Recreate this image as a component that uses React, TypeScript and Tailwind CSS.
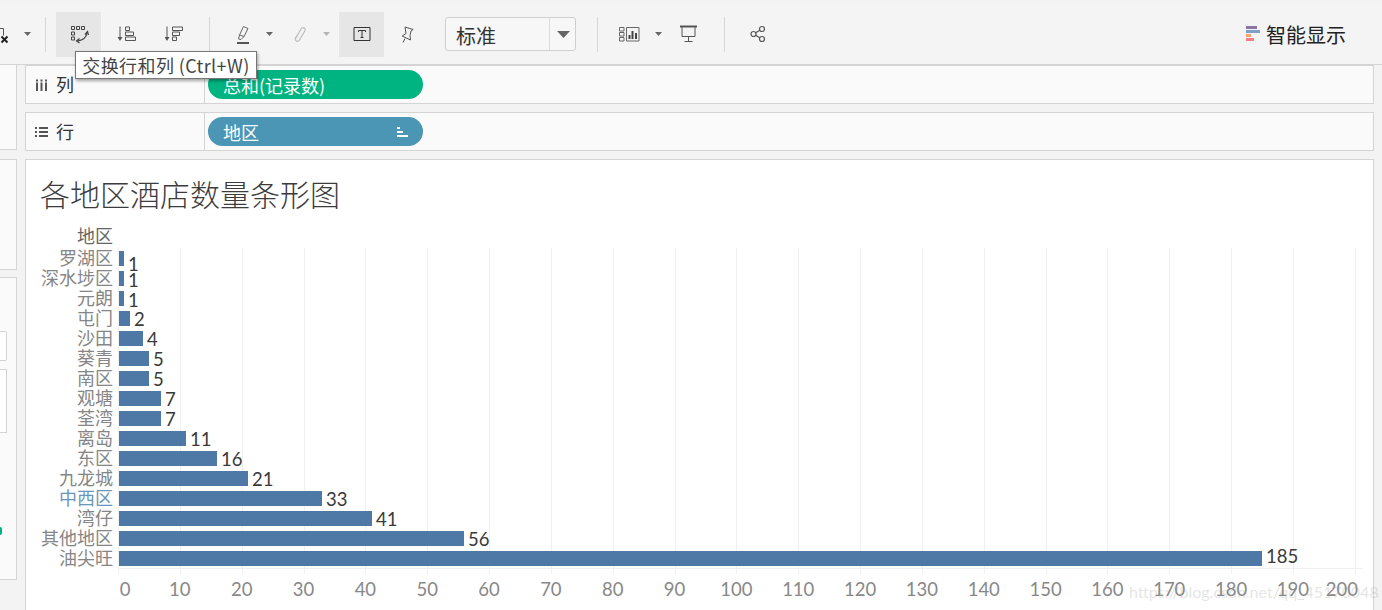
const rows: [string, number, number, number, string][] = [
  ["罗湖区", 1, 5, 6, "text-[#868686]"],
  ["深水埗区", 1, 5, 2, "text-[#868686]"],
  ["元朗", 1, 5, 2, "text-[#868686]"],
  ["屯门", 2, 11, 1, "text-[#868686]"],
  ["沙田", 4, 24, 1, "text-[#868686]"],
  ["葵青", 5, 30, 1, "text-[#868686]"],
  ["南区", 5, 30, 1, "text-[#868686]"],
  ["观塘", 7, 42, 1, "text-[#868686]"],
  ["荃湾", 7, 42, 1, "text-[#868686]"],
  ["离岛", 11, 67, 1, "text-[#868686]"],
  ["东区", 16, 98, 1, "text-[#868686]"],
  ["九龙城", 21, 129, 1, "text-[#868686]"],
  ["中西区", 33, 203, 1, "text-[#6a96bb]"],
  ["湾仔", 41, 253, 1, "text-[#868686]"],
  ["其他地区", 56, 345, 1, "text-[#868686]"],
  ["油尖旺", 185, 1143, -2, "text-[#868686]"],
];
const UNIT = 6.184;
const ticks = Array.from({ length: 21 }, (_, i) => i * 10);

function Sep({ className }: { className: string }) {
  return <div className={`h-[35px] w-px shrink-0 bg-[#d6d6d6] ${className}`} />;
}
function Caret({ className, light }: { className: string; light?: boolean }) {
  return (
    <svg width="7" height="4" viewBox="0 0 7 4" className={`shrink-0 ${className}`}>
      <path d="M0 0h7L3.500 4z" fill={light ? "#b5b5b5" : "#666"} />
    </svg>
  );
}
function Slot({ children, active, w }: { children: React.ReactNode; active?: boolean; w: string }) {
  return (
    <div className={`flex h-[45px] shrink-0 items-center justify-center ${w} ${active ? "bg-[#e6e6e6]" : ""}`}>
      {children}
    </div>
  );
}

function Toolbar() {
  return (
    <div className="flex h-[61px] items-center border-b border-[#d4d4d4] bg-[#f4f4f4]">
      <div className="h-[22px] w-[9px] shrink-0 overflow-hidden">
        <svg width="20" height="22" viewBox="0 0 20 22" className="ml-[-11px]">
          <path d="M4 5.500h10.500v7M4 5.500v11h6" fill="none" stroke="#555" strokeWidth="1" />
          <path d="M12.500 13.500l6 6M18.500 13.500l-6 6" stroke="#222" strokeWidth="2" />
        </svg>
      </div>
      <Caret className="ml-[15px]" />
      <Sep className="ml-[14px]" />
      <div className="ml-[10px]">
        <Slot active w="w-[45px]">
          <svg width="20" height="20" viewBox="0 0 20 20" fill="none" stroke="#444" strokeWidth="1">
            <path d="M2.500 2.500h3v3h-3zM7.500 2.500h3v3h-3zM12.500 2.500h3v3h-3zM2.500 8h3v3h-3zM2.500 13h3v3h-3z" />
            <path d="M18 9c-.5 3.500-3.500 7-9.500 8" strokeWidth="1.300" />
            <path d="M16 10.500L18.500 7.500l1 3.500M10.500 14.500L7.500 17l3 2" strokeWidth="1.200" />
          </svg>
        </Slot>
      </div>
      <Slot w="w-[49px]">
        <svg width="20" height="20" viewBox="0 0 20 20" fill="none" stroke="#555" strokeWidth="1">
          <path d="M4 2.500v12" />
          <path d="M1.500 13h5L4 17z" fill="#555" stroke="none" />
          <path d="M9.500 3h4v3.500h-4zM9.500 8h8v3.500h-8zM9.500 13h10v3.500h-10z" />
        </svg>
      </Slot>
      <Slot w="w-[49px]">
        <svg width="20" height="20" viewBox="0 0 20 20" fill="none" stroke="#555" strokeWidth="1">
          <path d="M2 2.500v12" />
          <path d="M-.5 13h5L2 17z" fill="#555" stroke="none" />
          <path d="M7.500 3h10v3.500h-10zM7.500 8h7v3.500h-7zM7.500 13h4v3.500h-4z" />
        </svg>
      </Slot>
      <Sep className="ml-[10px]" />
      <Slot w="w-[65px]">
        <svg width="14" height="20" viewBox="0 0 14 20" fill="none" stroke="#666" strokeWidth="1">
          <path d="M7.500 2.500L12 4.500 8 12.500 3.500 11z" />
          <path d="M3.500 11L2.500 15 5 15.500 8 12.500" />
          <path d="M1 19h12" stroke="#555" strokeWidth="2" />
        </svg>
      </Slot>
      <Caret className="ml-[-9px]" />
      <Slot w="w-[54px]">
        <svg width="14" height="17" viewBox="0 0 14 17" fill="none" stroke="#bdbdbd" strokeWidth="1.200">
          <path d="M3 12L8 3C9.500 .5 13 2 12 4.500L6.500 14C5 16.500 1.500 15 2.500 12L7 5" />
        </svg>
      </Slot>
      <Caret light className="ml-[-4px]" />
      <div className="ml-[9px]">
        <Slot active w="w-[45px]">
          <svg width="18" height="16" viewBox="0 0 18 16" fill="none" stroke="#333" strokeWidth="1">
            <path d="M1 1.500h16v13h-16z" />
            <path d="M5.500 6V4.500h7V6M9 4.500v7M7.500 11.500h3" />
          </svg>
        </Slot>
      </div>
      <Slot w="w-[45px]">
        <svg width="16" height="18" viewBox="0 0 16 18" fill="none" stroke="#555" strokeWidth="1">
          <path d="M6 2L14.200 4.500 12 6 11 10.500 11.500 15 3.200 11 7 8.500z" />
          <path d="M6 13.500L4 17.500" />
        </svg>
      </Slot>
      <div className="ml-[16px] flex h-[34px] w-[131px] shrink-0 items-center rounded-[3px] border border-[#cfcfcf] bg-[#f7f7f7]">
        <div className="flex h-full w-[104px] items-center border-r border-[#dcdcdc] pl-[10px] pt-[3px] text-[20px] leading-none text-[#333]">
          标准
        </div>
        <svg width="13" height="7" viewBox="0 0 13 7" className="ml-[7px]">
          <path d="M0 0h13L6.500 7z" fill="#666" />
        </svg>
      </div>
      <Sep className="ml-[21px]" />
      <Slot w="w-[63px]">
        <svg width="21" height="15" viewBox="0 0 21 15" fill="none" stroke="#666" strokeWidth="1">
          <path d="M.5 .5h4.500v3.500h-4.500zM.5 5.500h4.500v3.500h-4.500zM.5 10.500h4.500v3.500h-4.500zM7.500 .5h12.500v13.500h-12.500z" />
          <path d="M10.500 12v-4M13.500 12v-8M17 12v-6" stroke="#444" strokeWidth="2" />
        </svg>
      </Slot>
      <Caret className="ml-[-6px]" />
      <Slot w="w-[54px]">
        <svg width="20" height="18" viewBox="0 0 20 18" fill="none" stroke="#555" strokeWidth="1">
          <path d="M1 1.500h17" strokeWidth="2" />
          <path d="M3 2v9.500h13v-9.500M9.500 11.500v5M5.500 16.500h8" />
        </svg>
      </Slot>
      <Sep className="ml-[8px]" />
      <Slot w="w-[65px]">
        <svg width="16" height="18" viewBox="0 0 16 18" fill="none" stroke="#555" strokeWidth="1.200">
          <circle cx="3.500" cy="9" r="2.500" />
          <circle cx="12" cy="4" r="2.500" />
          <circle cx="12" cy="14" r="2.500" />
          <path d="M5.700 7.700l4-2.500M5.700 10.300l4 2.500" />
        </svg>
      </Slot>
      <div className="ml-auto mr-[36px] flex items-center">
        <svg width="14" height="16" viewBox="0 0 14 16" className="mr-[6px]">
          <rect x="0" y="0" width="11" height="3" fill="#8b76a3" />
          <rect x="0" y="4" width="14" height="3" fill="#7f9fc7" />
          <rect x="0" y="8" width="5" height="3" fill="#f4a56f" />
          <rect x="0" y="12" width="8" height="3" fill="#f47c87" />
        </svg>
        <span className="pt-[1px] text-[20px] leading-none text-[#222]">智能显示</span>
      </div>
    </div>
  );
}

function Shelf({ icon, label, pill, color, sort }: { icon: React.ReactNode; label: string; pill: string; color: string; sort?: boolean }) {
  return (
    <div className="flex h-[39px] border border-[#d4d4d4] bg-[#fafafa]">
      <div className="flex w-[179px] items-center border-r border-[#d4d4d4] pl-[9px] text-[18px] text-[#333]">
        <span className="mr-[8px] flex w-[13px] justify-center">{icon}</span>
        {label}
      </div>
      <div className={`ml-[3px] mt-[4px] flex h-[29px] w-[215px] items-center justify-between rounded-full pl-[15px] pr-[15px] text-[18px] leading-none text-white ${color}`}>
        <span>{pill}</span>
        {sort && (
          <svg width="11" height="10" viewBox="0 0 11 10" fill="#fff">
            <rect x="0" y="0" width="3" height="2" />
            <rect x="0" y="4" width="6" height="2" />
            <rect x="0" y="8" width="11" height="2" />
          </svg>
        )}
      </div>
    </div>
  );
}

function Chart() {
  return (
    <div className="relative min-h-0 flex-1 border-l border-t border-r border-[#d4d4d4] bg-white">
      <h1 className="h-[66px] pl-[14px] pt-[14px] text-[30px] font-light leading-[38px] text-[#3c3c3c]">各地区酒店数量条形图</h1>
      <div className="h-[22px] w-[87px] text-right text-[18px] leading-[18px] text-[#666]">地区</div>
      <div className="relative">
        <svg width="1260" height="330" className="absolute left-[92px] top-0" stroke="#f0f0f0" strokeWidth="1">
          {ticks.map((t) => (
            <line key={t} x1={Math.round(t * UNIT) + 0.5} x2={Math.round(t * UNIT) + 0.5} y1="0" y2="326" />
          ))}
          <line x1="0" x2="1245" y1="320.500" y2="320.500" />
        </svg>
        <div className="relative">
          {rows.map(([name, value, width, dy, tone]) => (
            <div key={name} className="flex h-5 items-center">
              <div className={`w-[87px] -translate-y-px text-right text-[18px] leading-5 ${tone}`}>{name}</div>
              <div className="ml-[6px] h-[15px] bg-[#4e79a7]" style={{ width }} />
              <div
                className="ml-[4px] font-['Lato',sans-serif] text-[18.5px] leading-5 text-[#3a3a3a]"
                style={{ transform: `translateY(${dy}px)` }}
              >
                {value}
              </div>
            </div>
          ))}
        </div>
        <div className="relative h-[42px] font-['Lato',sans-serif] text-[18.5px] leading-[42px] text-[#888]">
          {ticks.map((t) => (
            <span
              key={t}
              className="absolute top-0 -translate-x-1/2"
              style={{ left: 92 + t * UNIT + (t === 0 ? 7 : t === 200 ? -13 : 0) }}
            >
              {t}
            </span>
          ))}
        </div>
      </div>
      <div className="absolute left-[1103px] top-[420px] whitespace-nowrap font-['Lato',sans-serif] text-[16px] leading-6 text-[#9a9a9a] opacity-25">
        https://blog.csdn.net/qq_45170048
      </div>
    </div>
  );
}

export default function App() {
  return (
    <div className="flex h-[610px] w-[1382px] flex-col overflow-hidden bg-[#f3f3f3] pt-[4px] font-['Noto_Sans_CJK_SC',sans-serif]">
      <Toolbar />
      <div className="relative flex min-h-0 flex-1">
        <div className="flex w-[17px] shrink-0 flex-col">
          <div className="h-[85px] border-b border-r border-[#d4d4d4] bg-[#fafafa]" />
          <div className="mt-[9px] h-[111px] border-y border-r border-[#d4d4d4] bg-[#fafafa]" />
          <div className="mt-[7px] h-[303px] border-y border-r border-[#d4d4d4] bg-[#fafafa] pt-[53px]">
            <div className="h-[30px] w-[7px] rounded-r-[2px] border-y border-r border-[#d4d4d4] bg-white" />
            <div className="mt-[8px] h-[64px] w-[7px] border-y border-r border-[#d4d4d4] bg-white" />
            <div className="mt-[94px] h-[8px] w-[2px] rounded-r-full bg-[#00b482]" />
          </div>
        </div>
        <div className="ml-[8px] flex w-[1349px] shrink-0 flex-col">
          <Shelf
            label="列"
            pill="总和(记录数)"
            color="bg-[#00b482]"
            icon={
              <svg width="13" height="12" viewBox="0 0 13 12" fill="#555">
                <rect x="1" y="3.500" width="2" height="8.500" />
                <rect x="5.500" y="3.500" width="2" height="8.500" />
                <rect x="10" y="3.500" width="2" height="8.500" />
                <rect x="1" y="0.500" width="2" height="2" />
                <rect x="5.500" y="0.500" width="2" height="2" />
                <rect x="10" y="0.500" width="2" height="2" />
              </svg>
            }
          />
          <div className="mt-[8px]">
            <Shelf
              label="行"
              pill="地区"
              color="bg-[#4a96b4]"
              sort
              icon={
                <svg width="13" height="10" viewBox="0 0 13 10" fill="#555">
                  <rect x="0" y="0" width="2" height="2" />
                  <rect x="4" y="0" width="9" height="2" />
                  <rect x="0" y="4" width="2" height="2" />
                  <rect x="4" y="4" width="9" height="2" />
                  <rect x="0" y="8" width="2" height="2" />
                  <rect x="4" y="8" width="9" height="2" />
                </svg>
              }
            />
          </div>
          <div className="mt-[8px] flex min-h-0 flex-1 flex-col">
            <Chart />
          </div>
        </div>
        <div className="absolute left-[75px] top-[-14px] flex h-[28px] w-[182px] items-center justify-center whitespace-nowrap border border-[#777] bg-white text-[18px] leading-none tracking-[0.4px] text-[#444] shadow-[1px_2px_3px_rgba(0,0,0,0.35)]">
          交换行和列 (Ctrl+W)
        </div>
      </div>
    </div>
  );
}
